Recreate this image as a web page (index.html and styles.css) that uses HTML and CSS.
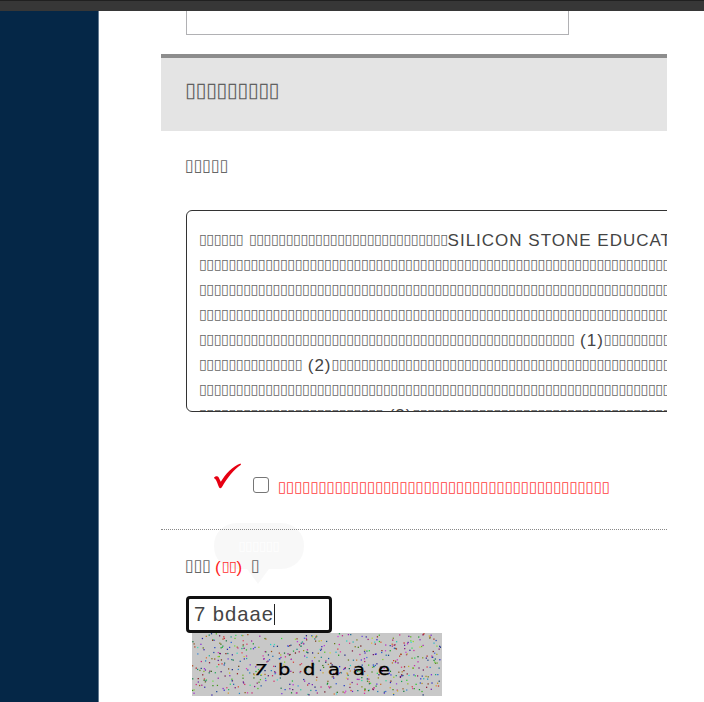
FILE: index.html
```html
<!DOCTYPE html>
<html lang="zh">
<head>
<meta charset="utf-8">
<title>Registration</title>
<link rel="stylesheet" href="styles.css">
</head>
<body>
<div class="topbar"></div>
<div class="page">
  <div class="sidebar"></div>
  <main class="content">
    <div class="field"></div>
    <h2 class="section-title"><span class="box" data-n="9"></span></h2>
    <div class="label"><span class="box" data-n="5"></span></div>
    <div class="terms">
      <div><span class="box" data-n="6"></span> <span class="box" data-n="27"></span>SILICON STONE EDUCAT</div>
      <div><span class="box" data-n="64"></span></div>
      <div><span class="box" data-n="64"></span></div>
      <div><span class="box" data-n="64"></span></div>
      <div><span class="box" data-n="51"></span> (1)<span class="box" data-n="9"></span></div>
      <div><span class="box" data-n="14"></span> (2)<span class="box" data-n="46"></span></div>
      <div><span class="box" data-n="64"></span></div>
      <div><span class="box" data-n="25"></span> (3)<span class="box" data-n="35"></span></div>
    </div>
    <div class="agree">
      <svg class="tick" width="29" height="27" viewBox="0 0 29 27"><path d="M1 14.5C2.5 13 4.800 12.500 5.600 14.200L7.800 18.800C12.500 11 19.500 3.500 27.500 0.500L28 1.800C20.500 7 14.500 14.500 9 24C7.800 25.600 6.700 25.600 6 24.200C4.600 21.300 3.800 18 2.700 16.500C2.200 15.800 1.500 16.200 1 14.500Z"/></svg>
      <span class="check"></span>
      <span class="box" data-n="41"></span>
    </div>
    <div class="captcha-row">
      <div class="bubble"><span class="box" data-n="6"></span></div>
      <div class="captcha-label"><span class="box" data-n="3"></span><span class="required">(<span class="box" data-n="2"></span>)</span><span class="box" data-n="1"></span></div>
      <div class="code-input">7 bdaae<span class="caret"></span></div>
      <svg class="captcha" width="250" height="63" viewBox="0 0 250 63">
        <rect width="250" height="63" fill="#c8c8c8"/>
        <g id="noise"></g>
        <g class="code">
          <text transform="translate(60.500 42) skewX(-14) scale(1.35 1)">7</text>
          <text transform="translate(86 42) scale(1.3 1)">b</text>
          <text transform="translate(111 42) scale(1.3 1)">d</text>
          <text transform="translate(136 42) scale(1.3 1)">a</text>
          <text transform="translate(161 42) scale(1.3 1)">a</text>
          <text transform="translate(186 42) scale(1.3 1)">e</text>
        </g>
      </svg>
    </div>
  </main>
</div>
<script src="script.js"></script>
</body>
</html>
```
FILE: styles.css
```css
* { box-sizing: border-box; }
body {
  margin: 0;
  height: 702px;
  overflow: hidden;
  background: #fff;
  color: #444;
  font-family: "Liberation Sans", Arial, sans-serif;
  letter-spacing: 1px;
}
.topbar { height: 11px; background: #373737; border-top: 1px solid #202020; }
.page { display: flex; height: 691px; }
.sidebar { width: 99px; flex: none; background: #052747; border-right: 1px solid #647a90; }
.content { width: 506px; flex: none; margin-left: 62px; overflow: hidden; }
.box {
  font-family: "DejaVu Sans", sans-serif;
  font-size: 14px;
  line-height: 0;
  letter-spacing: -0.345px;
  vertical-align: 0.12em;
  color: #666;
}
.field { width: 383px; height: 24px; margin-left: 25px; border: 1px solid #b1b1b4; border-top: 0; }
.section-title {
  height: 77px;
  margin: 19px 0 0;
  padding-left: 24px;
  border-top: 4px solid #8d8d8d;
  background: #e4e4e4;
  font-size: 25px;
  font-weight: normal;
  line-height: 65px;
}
.section-title .box { font-size: 20.6px; letter-spacing: -0.88px; color: #606060; }
.label { height: 79px; padding-left: 24px; line-height: 71px; font-size: 20px; }
.label .box, .captcha-label > .box { font-size: 16.5px; letter-spacing: -0.4px; }
.terms {
  width: 560px;
  height: 202px;
  margin-left: 25px;
  padding: 17px 12px;
  overflow: hidden;
  border: 1px solid #333;
  border-radius: 6px;
  font-size: 17px;
  line-height: 25px;
  white-space: nowrap;
}
.agree {
  display: flex;
  height: 118px;
  padding: 51px 0 0 52px;
  border-bottom: 1px dotted #888;
  white-space: nowrap;
}
.tick { fill: #e60012; }
.check { width: 16px; height: 16px; margin: 14px 0 0 11px; border: 1px solid #767676; border-radius: 3px; }
.agree .box { margin: 0 0 0 9px; font-size: 15px; line-height: 48px; letter-spacing: -0.16px; color: #ff4040; }
.captcha-row { position: relative; padding-left: 25px; }
.bubble {
  position: absolute;
  left: 53px;
  top: -7px;
  width: 90px;
  height: 46px;
  border-radius: 22px;
  background: rgba(0, 0, 0, 0.028);
  line-height: 47px;
  text-align: center;
}
.bubble::after {
  content: "";
  position: absolute;
  left: 33px;
  top: 46px;
  border: 11px solid transparent;
  border-top: 15px solid rgba(0, 0, 0, 0.028);
  border-bottom: 0;
}
.bubble .box { color: #fff; font-size: 13px; }
.captcha-label { position: relative; height: 66px; margin-left: -1px; font-size: 20px; line-height: 72px; white-space: nowrap; }
.required { margin: 0 8px 0 4px; font-size: 17px; color: #f22; }
.required .box { color: #ff3030; }
.code-input {
  display: flex;
  align-items: center;
  width: 146px;
  height: 37px;
  padding-left: 5px;
  border: 3px solid #101010;
  border-radius: 4px;
  font-size: 20.2px;
}
.caret { width: 1px; height: 21px; background: #222; }
.captcha { display: block; margin-left: 6px; }
.code { font: 15px "DejaVu Sans", sans-serif; letter-spacing: 0; fill: #000; stroke: #000; stroke-width: 0.3px; }
```
FILE: script.js
```js
document.querySelectorAll(".box").forEach(function (el) {
  el.textContent = "\u25AF".repeat(Number(el.dataset.n));
});

// Speckle behind the captcha code, from a fixed seed.
var seed = 7;
function rand() {
  seed = (seed * 16807) % 2147483647;
  return seed / 2147483647;
}
var noise = document.getElementById("noise");
for (var i = 0; i < 620; i++) {
  var dot = document.createElementNS("http://www.w3.org/2000/svg", "rect");
  dot.setAttribute("x", (rand() * 248.7).toFixed(1));
  dot.setAttribute("y", (rand() * 61.7).toFixed(1));
  dot.setAttribute("width", 1.25);
  dot.setAttribute("height", 1.25);
  dot.setAttribute("fill", "hsl(" + Math.floor(rand() * 360) + ",70%," + Math.floor(25 + rand() * 32) + "%)");
  noise.appendChild(dot);
}
```
